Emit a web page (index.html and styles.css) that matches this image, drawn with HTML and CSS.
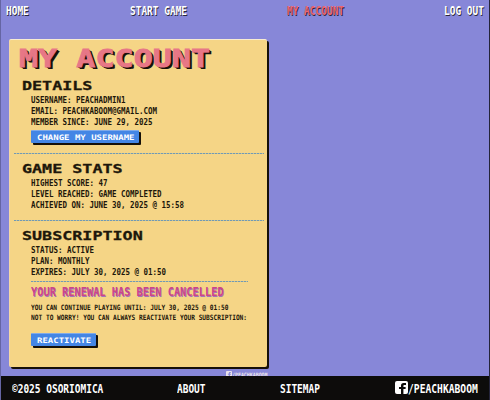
FILE: index.html
```html
<!DOCTYPE html>
<html lang="en">
<head>
<meta charset="utf-8">
<title>My Account</title>
<link rel="stylesheet" href="styles.css">
</head>
<body>
<div class="page">
  <nav class="nav">
    <a class="menu">HOME</a><a class="menu">START GAME</a><a class="menu active">MY ACCOUNT</a><a class="menu">LOG OUT</a>
  </nav>
  <main class="card">
    <h1>MY ACCOUNT</h1>
    <section class="details">
      <h2>DETAILS</h2>
      <p>USERNAME: PEACHADMIN1</p>
      <p>EMAIL: PEACHKABOOM@GMAIL.COM</p>
      <p>MEMBER SINCE: JUNE 29, 2025</p>
      <button class="change"><span>CHANGE MY USERNAME</span></button>
    </section>
    <section class="stats">
      <h2>GAME STATS</h2>
      <p>HIGHEST SCORE: 47</p>
      <p>LEVEL REACHED: GAME COMPLETED</p>
      <p>ACHIEVED ON: JUNE 30, 2025 @ 15:58</p>
    </section>
    <section class="subscription">
      <h2>SUBSCRIPTION</h2>
      <p>STATUS: ACTIVE</p>
      <p>PLAN: MONTHLY</p>
      <p>EXPIRES: JULY 30, 2025 @ 01:50</p>
      <div class="renewal">
        <h3>YOUR RENEWAL HAS BEEN CANCELLED</h3>
        <p class="note">YOU CAN CONTINUE PLAYING UNTIL: JULY 30, 2025 @ 01:50</p>
        <p class="note">NOT TO WORRY! YOU CAN ALWAYS REACTIVATE YOUR SUBSCRIPTION:</p>
        <button class="reactivate"><span>REACTIVATE</span></button>
      </div>
    </section>
  </main>
  <div class="credit">
    <svg viewBox="0 0 13 13"><rect width="13" height="13" rx="2" fill="#e9e2ea"/><path d="M6 13V8H4V6h2V4.5Q6 2 8.5 2H11v2H9.2Q8.4 4 8.4 4.8V6h2.2v2H8.4v5z" fill="#8787d8"/></svg>
    <span>/PEACHKABOOM</span>
  </div>
  <footer class="footer">
    <a class="menu">©2025 OSORIOMICA</a><a class="menu">ABOUT</a><a class="menu">SITEMAP</a>
    <a class="social"><svg viewBox="0 0 13 13"><rect width="13" height="13" rx="2" fill="#fff"/><path d="M6 13V8H4V6h2V4.5Q6 2 8.5 2H11v2H9.2Q8.4 4 8.4 4.8V6h2.2v2H8.4v5z" fill="#0d0c0b"/></svg><span class="menu">/PEACHKABOOM</span></a>
  </footer>
</div>
</body>
</html>
```
FILE: styles.css
```css
* { box-sizing: border-box; }
body {
  margin: 0;
  font-family: "DejaVu Sans Mono", "Liberation Mono", monospace;
  font-weight: bold;
  color: #1d170b;
}
.page {
  display: flex;
  flex-direction: column;
  width: 490px;
  height: 400px;
  overflow: hidden;
  background: #8787d8;
  border-left: 1px solid #6565a3;
  border-right: 1px solid #24243a;
}
h1, h2, h3, p { margin: 0; white-space: pre; transform-origin: 0 50%; }
.menu {
  display: block;
  font-size: 12px;
  line-height: 14px;
  white-space: pre;
  color: #fff;
  transform: scaleX(.79);
  transform-origin: 0 50%;
}
.nav {
  display: grid;
  grid-template-columns: 124px 157px 157px 45px;
  flex: 0 0 39px;
  padding: 4px 0 0 5px;
}
.nav .menu { text-shadow: 1px 1px 0 #292739; }
.nav .active { color: #ec6672; }
.card {
  flex: 0 0 328px;
  width: 258px;
  margin-left: 8px;
  padding: 5px 3px 0 4px;
  background: #f5d586;
  border-top: 1px solid #f8ecd2;
  border-left: 1px solid #f3d7a8;
  border-radius: 2px;
  box-shadow: 2px 2px 0 #151009;
}
h1 {
  height: 32px;
  margin-left: 5px;
  width: 185px;
  font-size: 25px;
  line-height: 28px;
  color: #e77786;
  -webkit-text-stroke: .8px #e77786;
  text-shadow: 1px 1px 0 #17100b, 2px 2px 0 #17100b;
  transform: scaleX(1.27);
}
section { padding-left: 16.5px; }
h2 {
  width: 150px;
  height: 18px;
  margin-left: -9px;
  font-size: 13px;
  line-height: 18px;
  -webkit-text-stroke: .3px #1d170b;
  transform: scaleX(1.285);
}
p {
  width: 200px;
  height: 11px;
  font-size: 8.5px;
  line-height: 11px;
  transform: scaleX(.88);
}
.details { height: 76px; }
.stats, .subscription, .renewal {
  background: repeating-linear-gradient(90deg, #7299b4 0 2px, #c2c49a 2px 3px) top / 100% 1px no-repeat;
}
.stats { height: 67px; padding-top: 7px; }
.subscription { padding-top: 7px; }
button {
  display: flex;
  align-items: center;
  height: 13px;
  padding: 0 0 0 6px;
  border: 0;
  border-top: 1px solid #80aae8;
  border-radius: 1px;
  background: #4486e5;
  box-shadow: 2px 2px 0 #151009;
  color: #fff;
  font: bold 7.5px/11px "DejaVu Sans Mono", monospace;
}
button span { white-space: pre; transform: scaleX(1.2); transform-origin: 0 50%; }
.change { width: 108px; margin-top: 2px; }
.reactivate { width: 65px; margin-top: 10px; }
.renewal { width: 217px; margin-top: 3px; padding-top: 4px; }
.stats, .subscription { margin-right: 0; }
h3 {
  width: 230px;
  height: 18px;
  font-size: 12px;
  line-height: 15px;
  color: #cc4588;
  text-shadow: .7px .7px 0 #a177b8;
  transform: scaleX(.86);
}
.note { width: 270px; height: 10px; font-size: 7.3px; line-height: 10px; transform: scaleX(.848); }
.credit {
  display: flex;
  flex: 1 1 0;
  min-height: 0;
  margin-left: 225px;
  padding-top: 4px;
  overflow: hidden;
  color: #e9e2ea;
  font-size: 6px;
  line-height: 7px;
}
.credit svg { flex: none; width: 6px; height: 6px; }
.credit span { height: 7px; transform: scaleX(.82); transform-origin: 0 50%; }
.footer {
  display: grid;
  grid-template-columns: 165px 103px 115px 90px;
  flex: 0 0 24px;
  margin: 0 -1px;
  padding: 6px 0 0 12px;
  background: #0d0c0b;
}
.social { display: flex; height: 14px; align-items: flex-start; }
.social svg { flex: none; width: 13px; height: 13px; margin-top: -1px; }
.social .menu { width: 75px; transform: scaleX(.805); }
```
